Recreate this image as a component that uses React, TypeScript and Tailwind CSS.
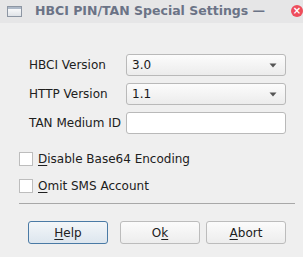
import React from "react";

const Combo = ({ value }: { value: string }) => (
    <div className="flex items-center justify-between w-[160px] h-[22px] pl-[5px] pr-[8px] rounded-[3px] border border-[#b9b9b9] bg-gradient-to-b from-[#fcfcfc] to-[#ececec] text-[#1a1a1a]">
        <span>{value}</span>
        <svg width="8" height="5" viewBox="0 0 8 5">
            <path d="M0.5 0.5 H7.5 L4 4.5 Z" fill="#555" />
        </svg>
    </div>
);

const Check = ({ first, rest }: { first: string; rest: string }) => (
    <div className="flex items-center h-[14px] gap-[5px]">
        <div className="w-[14px] h-[14px] border border-[#bdbdbd] bg-white" />
        <span>
            <span className="underline underline-offset-[2px]">{first}</span>
            {rest}
        </span>
    </div>
);

const Btn = ({ pre, ul, post, help }: { pre: string; ul: string; post: string; help?: boolean }) => (
    <button
        className={
            "w-[80px] h-[23px] rounded-[3px] border text-center text-[#202020] " +
            (help
                ? "border-[#4a7aa5] bg-gradient-to-b from-[#f3f6f9] to-[#dde6ee]"
                : "border-[#bcbcbc] bg-gradient-to-b from-[#fbfbfb] to-[#ededed]")
        }
    >
        {pre}
        <span className="underline underline-offset-[2px]">{ul}</span>
        {post}
    </button>
);

const App = () => {
    return (
        <div className="w-[303px] h-[257px] bg-[#efefef] text-[12px] text-[#202020] overflow-hidden" style={{ fontFamily: '"DejaVu Sans", sans-serif' }}>
            <div className="flex items-center h-[23px] bg-[#e6e6e7] relative">
                <div className="ml-[7px] w-[15px] h-[11px] border border-[#8d96a3] bg-gradient-to-b from-[#ffffff] to-[#dfe3e8]">
                    <div className="h-[2px] bg-[#aeb9c8]" />
                </div>
                <span className="ml-[13px] font-bold text-[12.5px] text-[#6b7386] whitespace-nowrap">
                    HBCI PIN/TAN Special Settings —
                </span>
                <div className="absolute left-[291px] top-[5px] w-[12px] h-[12px] rounded-full bg-[#ee4d5b] flex items-center justify-center">
                    <span className="text-white text-[10px] font-bold leading-none">×</span>
                </div>
            </div>

            <div className="pt-[31px] pl-[29px] flex flex-col gap-[7px]">
                <div className="flex items-center">
                    <span className="w-[97px]">HBCI Version</span>
                    <Combo value="3.0" />
                </div>
                <div className="flex items-center">
                    <span className="w-[97px]">HTTP Version</span>
                    <Combo value="1.1" />
                </div>
                <div className="flex items-center">
                    <span className="w-[97px] whitespace-nowrap">TAN Medium ID</span>
                    <div className="w-[160px] h-[22px] rounded-[3px] border border-[#b9b9b9] bg-white" />
                </div>
            </div>

            <div className="pt-[18px] pl-[19px] flex flex-col gap-[13px]">
                <Check first="D" rest="isable Base64 Encoding" />
                <Check first="O" rest="mit SMS Account" />
            </div>

            <div className="mt-[10px] ml-[19px] w-[276px] h-px bg-[#a8a8a8]" />

            <div className="flex mt-[17px] pl-[28px]">
                <Btn pre="" ul="H" post="elp" help />
                <div className="ml-[12px] flex gap-[6px]">
                    <Btn pre="O" ul="k" post="" />
                    <Btn pre="" ul="A" post="bort" />
                </div>
            </div>
        </div>
    );
};

export default App;
